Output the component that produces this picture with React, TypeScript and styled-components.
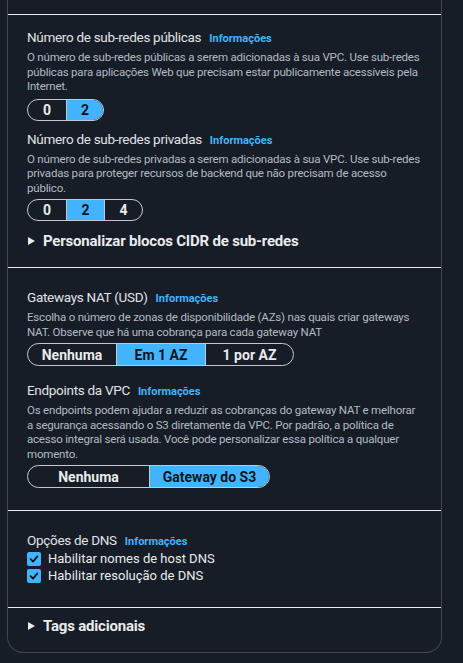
import React from "react";
import styled, { createGlobalStyle } from "styled-components";

const Global = createGlobalStyle`
  html, body { margin: 0; padding: 0; background: #161d26; }
  body { font-family: Roboto, "Open Sans", sans-serif; color: #e0e2e6; }
  * { box-sizing: border-box; }
`;

const Page = styled.div`
  width: 463px;
  height: 663px;
  overflow: hidden;
  background: #161d26;
  padding-left: 7px;
`;

const Card = styled.div`
  width: 435px;
  border: 1px solid #424650;
  border-top: none;
  border-radius: 0 0 16px 16px;
  display: flex;
  flex-direction: column;
`;

const Section = styled.div<{ $pt: number; $pb: number }>`
  padding: ${(p) => p.$pt}px 20px ${(p) => p.$pb}px 19px;
  border-bottom: 1px solid #e9ebed;
  display: flex;
  flex-direction: column;
  &:last-child { border-bottom: none; }
`;

const Field = styled.div<{ $mt?: number }>`
  display: flex;
  flex-direction: column;
  margin-top: ${(p) => p.$mt ?? 0}px;
`;

const LabelRow = styled.div`
  display: flex;
  align-items: baseline;
  gap: 8px;
  height: 20px;
  line-height: 20px;
`;

const Label = styled.span`
  font-size: 13.5px;
  letter-spacing: -0.3px;
  color: #e0e2e6;
`;

const Info = styled.span`
  font-size: 11px;
  font-weight: 700;
  color: #42b4ff;
`;

const Desc = styled.div`
  font-size: 11.5px;
  letter-spacing: -0.2px;
  line-height: 14.5px;
  color: #b4bac4;
  margin-top: 3px;
  max-width: 396px;
`;

const Segments = styled.div<{ $mt: number }>`
  display: inline-flex;
  align-self: flex-start;
  margin-top: ${(p) => p.$mt}px;
  border: 1px solid #c6c9cf;
  border-radius: 12px;
  overflow: hidden;
`;

const Seg = styled.div<{ $w: number; $h: number; $on?: boolean }>`
  width: ${(p) => p.$w}px;
  height: ${(p) => p.$h}px;
  display: flex;
  align-items: center;
  justify-content: center;
  font-size: 14px;
  font-weight: 700;
  color: ${(p) => (p.$on ? "#0f141a" : "#e9ebed")};
  background: ${(p) => (p.$on ? "#42b4ff" : "transparent")};
  border-left: 1px solid #c6c9cf;
  &:first-child { border-left: none; }
`;

const Expand = styled.div<{ $mt?: number }>`
  display: flex;
  align-items: center;
  gap: 8px;
  height: 20px;
  margin-top: ${(p) => p.$mt ?? 0}px;
  font-size: 15px;
  letter-spacing: -0.2px;
  font-weight: 700;
  color: #e9ebed;
`;

const Caret = styled.span`
  width: 0;
  height: 0;
  margin-left: 1px;
  border-top: 4px solid transparent;
  border-bottom: 4px solid transparent;
  border-left: 7px solid #e9ebed;
`;

const Checks = styled.div`
  display: flex;
  flex-direction: column;
`;

const CheckRow = styled.label`
  display: flex;
  align-items: center;
  gap: 7px;
  height: 17px;
  font-size: 13px;
  color: #e9ebed;
`;

const Box = styled.span`
  width: 14px;
  height: 14px;
  border-radius: 2px;
  background: #42b4ff;
  display: flex;
  align-items: center;
  justify-content: center;
`;

const Check = () => (
  <Box>
    <svg width="10" height="10" viewBox="0 0 10 10">
      <path d="M1.6 5.2 L4 7.6 L8.4 2.4" fill="none" stroke="#0f141a" strokeWidth="1.8" strokeLinecap="round" strokeLinejoin="round" />
    </svg>
  </Box>
);

export default function App() {
  return (
    <Page>
      <Global />
      <Card>
        <Section $pt={14} $pb={0}> </Section>
        <Section $pt={12} $pb={16}>
          <Field>
            <LabelRow>
              <Label>Número de sub-redes públicas</Label>
              <Info>Informações</Info>
            </LabelRow>
            <Desc>
              O número de sub-redes públicas a serem adicionadas à sua VPC. Use sub-redes públicas para aplicações Web que precisam estar publicamente acessíveis pela Internet.
            </Desc>
            <Segments $mt={5}>
              <Seg $w={38} $h={20}>0</Seg>
              <Seg $w={37} $h={20} $on>2</Seg>
            </Segments>
          </Field>
          <Field $mt={8}>
            <LabelRow>
              <Label>Número de sub-redes privadas</Label>
              <Info>Informações</Info>
            </LabelRow>
            <Desc>
              O número de sub-redes privadas a serem adicionadas à sua VPC. Use sub-redes privadas para proteger recursos de backend que não precisam de acesso público.
            </Desc>
            <Segments $mt={4}>
              <Seg $w={38} $h={20}>0</Seg>
              <Seg $w={38} $h={20} $on>2</Seg>
              <Seg $w={38} $h={20}>4</Seg>
            </Segments>
          </Field>
          <Expand $mt={10}>
            <Caret />
            Personalizar blocos CIDR de sub-redes
          </Expand>
        </Section>
        <Section $pt={19} $pb={22}>
          <Field>
            <LabelRow>
              <Label>Gateways NAT (USD)</Label>
              <Info>Informações</Info>
            </LabelRow>
            <Desc>
              Escolha o número de zonas de disponibilidade (AZs) nas quais criar gateways NAT. Observe que há uma cobrança para cada gateway NAT
            </Desc>
            <Segments $mt={4}>
              <Seg $w={88} $h={21}>Nenhuma</Seg>
              <Seg $w={89} $h={21} $on>Em 1 AZ</Seg>
              <Seg $w={88} $h={21}>1 por AZ</Seg>
            </Segments>
          </Field>
          <Field $mt={14}>
            <LabelRow>
              <Label>Endpoints da VPC</Label>
              <Info>Informações</Info>
            </LabelRow>
            <Desc>
              Os endpoints podem ajudar a reduzir as cobranças do gateway NAT e melhorar a segurança acessando o S3 diretamente da VPC. Por padrão, a política de acesso integral será usada. Você pode personalizar essa política a qualquer momento.
            </Desc>
            <Segments $mt={4}>
              <Seg $w={121} $h={21}>Nenhuma</Seg>
              <Seg $w={120} $h={21} $on>Gateway do S3</Seg>
            </Segments>
          </Field>
        </Section>
        <Section $pt={19} $pb={23}>
          <Field>
            <LabelRow>
              <Label>Opções de DNS</Label>
              <Info>Informações</Info>
            </LabelRow>
            <Checks>
              <CheckRow>
                <Check />
                Habilitar nomes de host DNS
              </CheckRow>
              <CheckRow>
                <Check />
                Habilitar resolução de DNS
              </CheckRow>
            </Checks>
          </Field>
        </Section>
        <Section $pt={8} $pb={16}>
          <Expand>
            <Caret />
            Tags adicionais
          </Expand>
        </Section>
      </Card>
    </Page>
  );
}
